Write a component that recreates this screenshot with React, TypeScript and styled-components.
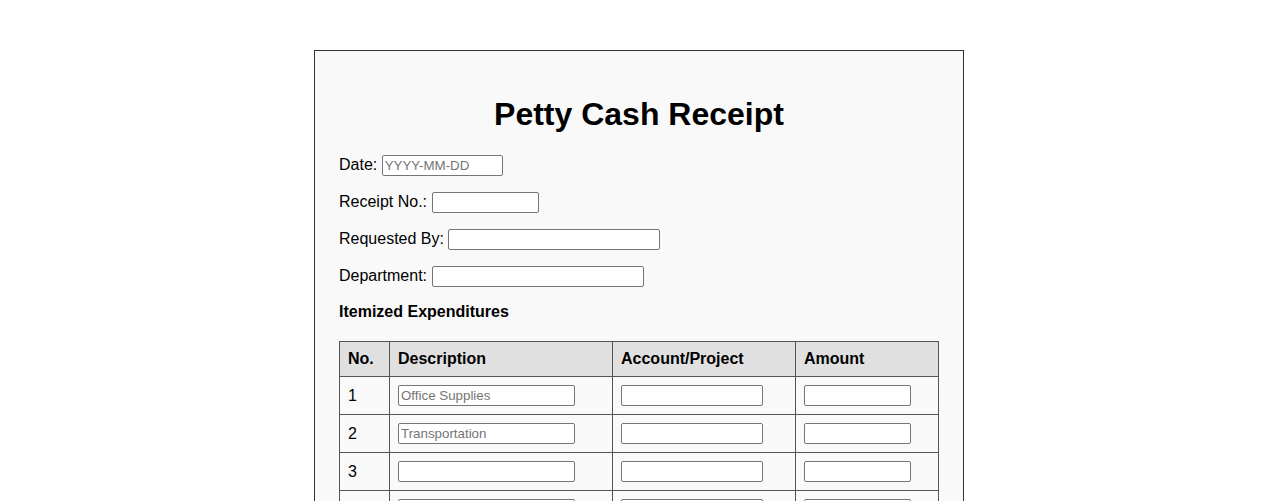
import React from "react"
import styled, { createGlobalStyle } from "styled-components"

const GlobalStyle = createGlobalStyle`
  body {
    margin: 0;
    background: #ffffff;
    font-family: "Liberation Sans", Arial, sans-serif;
    font-size: 16px;
    color: #000000;
  }
`

const Page = styled.div`
  padding-top: 50px;
  padding-bottom: 40px;
`

const Card = styled.div`
  width: 600px;
  margin: 0 auto;
  padding: 24px;
  background: #f9f9f9;
  border: 1px solid #333333;
`

const Title = styled.h1`
  margin: 21px 0 21px;
  font-size: 32px;
  font-weight: bold;
  text-align: center;
`

const FieldRow = styled.div`
  margin-bottom: 15px;
  line-height: 22px;
`

const Label = styled.label`
  font-size: 16px;
`

const TextInput = styled.input<{ $width: number }>`
  box-sizing: border-box;
  width: ${(p) => p.$width}px;
  height: 21px;
  padding: 1px 2px;
  margin: 0;
  border: 1px solid #767676;
  border-radius: 2px;
  background: #ffffff;
  font-family: "Liberation Sans", Arial, sans-serif;
  font-size: 13.333px;
  color: #000000;
  vertical-align: baseline;

  &::placeholder {
    color: #757575;
  }
`

const SectionTitle = styled.div`
  padding-top: 1px;
  margin-bottom: 20px;
  font-weight: bold;
  font-size: 16px;
`

const Table = styled.table`
  width: 599px;
  border-collapse: collapse;
  table-layout: fixed;

  th,
  td {
    border: 1px solid #555555;
    padding: 8px;
    text-align: left;
    font-size: 16px;
  }

  th {
    background: #e0e0e0;
    font-weight: bold;
  }
`

const TotalCell = styled.td`
  font-weight: bold;
  text-align: right !important;
`

const Signatures = styled.div`
  margin-top: 24px;
`

const columns = [
  { label: "No.", width: 50 },
  { label: "Description", width: 223 },
  { label: "Account/Project", width: 183 },
  { label: "Amount", width: 143 },
]

const items = [
  { no: 1, description: "Office Supplies" },
  { no: 2, description: "Transportation" },
  { no: 3, description: "" },
  { no: 4, description: "" },
  { no: 5, description: "" },
]

export default function App() {
  return (
    <>
      <GlobalStyle />
      <Page>
        <Card>
          <Title>Petty Cash Receipt</Title>

          <FieldRow>
            <Label htmlFor="date">Date:</Label>{" "}
            <TextInput id="date" type="text" placeholder="YYYY-MM-DD" $width={121} />
          </FieldRow>
          <FieldRow>
            <Label htmlFor="receipt">Receipt No.:</Label>{" "}
            <TextInput id="receipt" type="text" $width={107} />
          </FieldRow>
          <FieldRow>
            <Label htmlFor="requested">Requested By:</Label>{" "}
            <TextInput id="requested" type="text" $width={212} />
          </FieldRow>
          <FieldRow>
            <Label htmlFor="department">Department:</Label>{" "}
            <TextInput id="department" type="text" $width={212} />
          </FieldRow>

          <SectionTitle>Itemized Expenditures</SectionTitle>

          <Table>
            <colgroup>
              {columns.map((c) => (
                <col key={c.label} style={{ width: c.width }} />
              ))}
            </colgroup>
            <thead>
              <tr>
                {columns.map((c) => (
                  <th key={c.label}>{c.label}</th>
                ))}
              </tr>
            </thead>
            <tbody>
              {items.map((item) => (
                <tr key={item.no}>
                  <td>{item.no}</td>
                  <td>
                    <TextInput type="text" placeholder={item.description} $width={177} />
                  </td>
                  <td>
                    <TextInput type="text" $width={142} />
                  </td>
                  <td>
                    <TextInput type="text" $width={107} />
                  </td>
                </tr>
              ))}
              <tr>
                <TotalCell colSpan={3}>Total</TotalCell>
                <td>
                  <TextInput type="text" $width={107} />
                </td>
              </tr>
            </tbody>
          </Table>

          <Signatures>
            <FieldRow>
              <Label htmlFor="received">Received By:</Label>{" "}
              <TextInput id="received" type="text" $width={212} />
            </FieldRow>
            <FieldRow>
              <Label htmlFor="approved">Approved By:</Label>{" "}
              <TextInput id="approved" type="text" $width={212} />
            </FieldRow>
          </Signatures>
        </Card>
      </Page>
    </>
  )
}
